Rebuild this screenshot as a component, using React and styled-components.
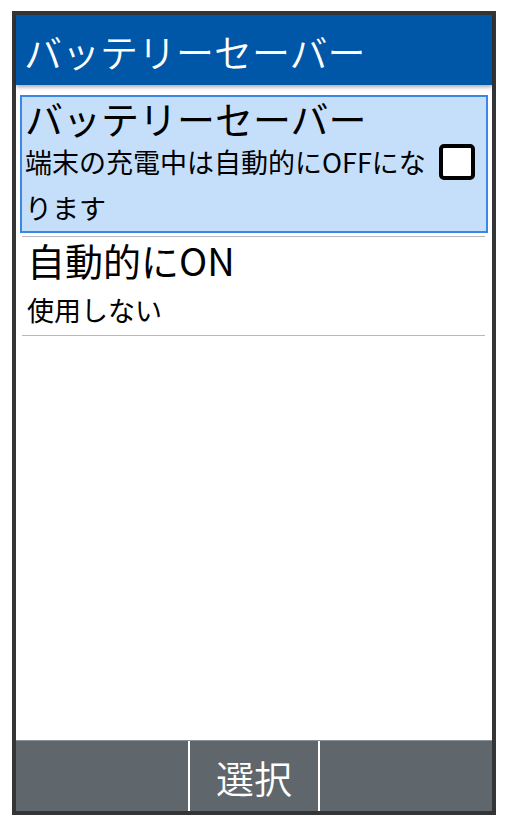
import React from 'react';
import styled, { createGlobalStyle } from 'styled-components';

const GlobalStyle = createGlobalStyle`
  html, body {
    margin: 0;
    padding: 0;
    background: #ffffff;
    font-family: "Noto Sans CJK JP", "Noto Sans", sans-serif;
  }
`;

const Page = styled.div`
  padding: 11px 11px 11px 12px;
`;

const Phone = styled.div`
  width: 484px;
  height: 804px;
  box-sizing: border-box;
  border: 4px solid #343536;
  display: flex;
  flex-direction: column;
  background: #ffffff;
`;

const TitleBar = styled.div`
  height: 70px;
  background: #0056a7;
  color: #ffffff;
  font-size: 38px;
  font-weight: 350;
  display: flex;
  align-items: center;
  padding-left: 8px;
  box-shadow: 0 2px 4px rgba(0, 0, 0, 0.35);
  position: relative;
  z-index: 1;
`;

const List = styled.div`
  flex: 1;
  padding: 10px 4px 0 4px;
  display: flex;
  flex-direction: column;
`;

const Item = styled.div`
  padding: ${p => (p.selected ? '0 11px 0 3px' : '0 11px 0 5px')};
  border: 2px solid ${p => (p.selected ? '#3a87e4' : 'transparent')};
  background: ${p => (p.selected ? '#c5dffb' : 'transparent')};
  color: #000000;
`;

const ItemTitle = styled.div`
  font-size: 38px;
  line-height: 42px;
  height: 42px;
  white-space: nowrap;
`;

const ItemBody = styled.div`
  display: flex;
  align-items: flex-start;
  gap: 12px;
  margin-top: ${p => p.gap || 0}px;
`;

const ItemText = styled.div`
  flex: 1;
  font-size: 27px;
  line-height: 46px;
`;

const CheckBox = styled.div`
  width: 36px;
  height: 36px;
  box-sizing: border-box;
  border: 4px solid #000000;
  border-radius: 5px;
  background: #ffffff;
  margin-top: 5px;
  flex-shrink: 0;
`;

const Divider = styled.div`
  height: 1px;
  background: #b9b9b9;
  margin: ${p => p.top}px 3px 0 2px;
`;

const SoftKeys = styled.div`
  height: 70px;
  display: grid;
  grid-template-columns: 172px 2px 128px 2px 1fr;
  background: #5f676d;
  border-top: 1px solid #8a9096;
`;

const KeySep = styled.div`
  background: #ffffff;
`;

const SoftKey = styled.div`
  color: #ffffff;
  font-size: 38px;
  font-weight: 350;
  display: flex;
  align-items: center;
  justify-content: center;
`;

export default function App() {
  return (
    <Page>
      <GlobalStyle />
      <Phone>
        <TitleBar>バッテリーセーバー</TitleBar>
        <List>
          <Item selected>
            <ItemTitle>バッテリーセーバー</ItemTitle>
            <ItemBody>
              <ItemText>端末の充電中は自動的にOFFになります</ItemText>
              <CheckBox />
            </ItemBody>
          </Item>
          <Divider top={3} />
          <Item>
            <ItemTitle>自動的にON</ItemTitle>
            <ItemBody gap={6}>
              <ItemText>使用しない</ItemText>
            </ItemBody>
          </Item>
          <Divider top={0} />
        </List>
        <SoftKeys>
          <SoftKey />
          <KeySep />
          <SoftKey>選択</SoftKey>
          <KeySep />
          <SoftKey />
        </SoftKeys>
      </Phone>
    </Page>
  );
}
